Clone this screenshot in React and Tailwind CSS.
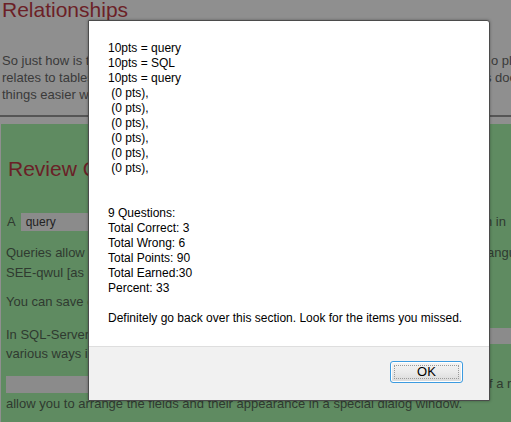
import React from "react";

const dialogLines = [
  "10pts = query",
  "10pts = SQL",
  "10pts = query",
  " (0 pts),",
  " (0 pts),",
  " (0 pts),",
  " (0 pts),",
  " (0 pts),",
  " (0 pts),",
  "",
  "",
  "9 Questions:",
  "Total Correct: 3",
  "Total Wrong: 6",
  "Total Points: 90",
  "Total Earned:30",
  "Percent: 33",
  "",
  "Definitely go back over this section. Look for the items you missed.",
];

export default function App() {
  return (
    <div className="relative h-[422px] w-[511px] overflow-hidden bg-[#8f8f8f] font-['Liberation_Sans',Arial,sans-serif]">
      {/* dimmed page behind the dialog */}
      <div className="pl-[2px] text-[#3a3a3a]">
        <h1 className="-mt-[2px] text-[21px] leading-[24px] text-[#6c1f27]">Relationships</h1>
        <div className="mt-[30px] text-[13px] leading-[17px]">
          <div className="flex whitespace-nowrap">
            <span className="w-[489px] shrink-0 overflow-hidden">So just how is this relationship between tables used? Queries t</span>
            <span>o plan</span>
          </div>
          <div className="flex whitespace-nowrap">
            <span className="w-[483px] shrink-0 overflow-hidden">relates to tables and the fields inside them. A query make</span>
            <span>s does</span>
          </div>
          <div className="whitespace-nowrap">things easier when working with data.</div>
        </div>
      </div>
      <div className="mt-[12px] h-[2px] bg-[#555555]" />

      <div className="mt-[7px] ml-[1px] h-[298px] bg-[#5f8b61] pl-[5px] text-[13px] text-[#2f3a30]">
        <h2 className="pt-[33px] pl-[2px] text-[21px] leading-[24px] text-[#6a2127]">Review Questions</h2>

        <div className="mt-[32px] flex h-[18px] items-center whitespace-nowrap">
          <div className="flex w-[479px] shrink-0 items-center overflow-hidden">
            <span className="ml-[1px]">A</span>
            <span className="ml-[5px] flex h-[18px] w-[300px] items-center bg-[#8b8b8b] pl-[5px] text-[12px] text-[#222]">query</span>
          </div>
          <span>n in</span>
        </div>

        <div className="mt-[12px] leading-[19.5px]">
          <div className="flex whitespace-nowrap">
            <span className="w-[481px] shrink-0 overflow-hidden">Queries allow you to ask questions of your data using a special l</span>
            <span>angua</span>
          </div>
          <div className="whitespace-nowrap">SEE-qwul [as in sequel] or S-Q-L.</div>
        </div>

        <div className="mt-[10px] whitespace-nowrap leading-[19.5px]">You can save queries and run them again later.</div>

        <div className="mt-[13px] leading-[19.5px]">
          <div className="flex items-center whitespace-nowrap">
            <span className="w-[484px] shrink-0 overflow-hidden">In SQL-Server Management Studio, a query can be</span>
            <span className="mt-[3px] h-[16px] w-[40px] bg-[#8b8b8b]" />
          </div>
          <div className="whitespace-nowrap">various ways in the designer.</div>
        </div>

        <div className="mt-[12px] flex h-[17px] items-center whitespace-nowrap">
          <div className="w-[483px] shrink-0 overflow-hidden">
            <div className="h-[17px] w-[300px] bg-[#8b8b8b]" />
          </div>
          <span>f a r</span>
        </div>

        <div className="mt-[1px] whitespace-nowrap leading-[20px]">
          allow you to arrange the fields and their appearance in a special dialog window.
        </div>
      </div>

      {/* modal dialog */}
      <div className="absolute left-[88px] top-[20px] flex h-[381px] w-[402px] flex-col rounded-tr-[3px] border border-[#4b4b4b] bg-white shadow-[0_0_3px_rgba(0,0,0,0.35)]">
        <div className="h-[325px] pl-[19px] pt-[20px] text-[12px] leading-[15px] text-black">
          {dialogLines.map((line, i) => (
            <div key={i} className="h-[15px] whitespace-pre">{line}</div>
          ))}
        </div>
        <div className="flex flex-1 items-start justify-end border-t border-[#dedede] bg-[#f1f1f1] pr-[26px] pt-[14px]">
          <button className="relative h-[22px] w-[73px] rounded-[3px] border border-[#3c9be0] bg-gradient-to-b from-[#f4f4f4] via-[#ebebeb] to-[#d9d9d9] text-[13px] leading-[20px] text-black shadow-[inset_0_0_0_1px_#ffffff]">
            <span className="absolute inset-[3px] border border-dotted border-[#9a9a9a]" />
            <span className="relative">OK</span>
          </button>
        </div>
      </div>
    </div>
  );
}
